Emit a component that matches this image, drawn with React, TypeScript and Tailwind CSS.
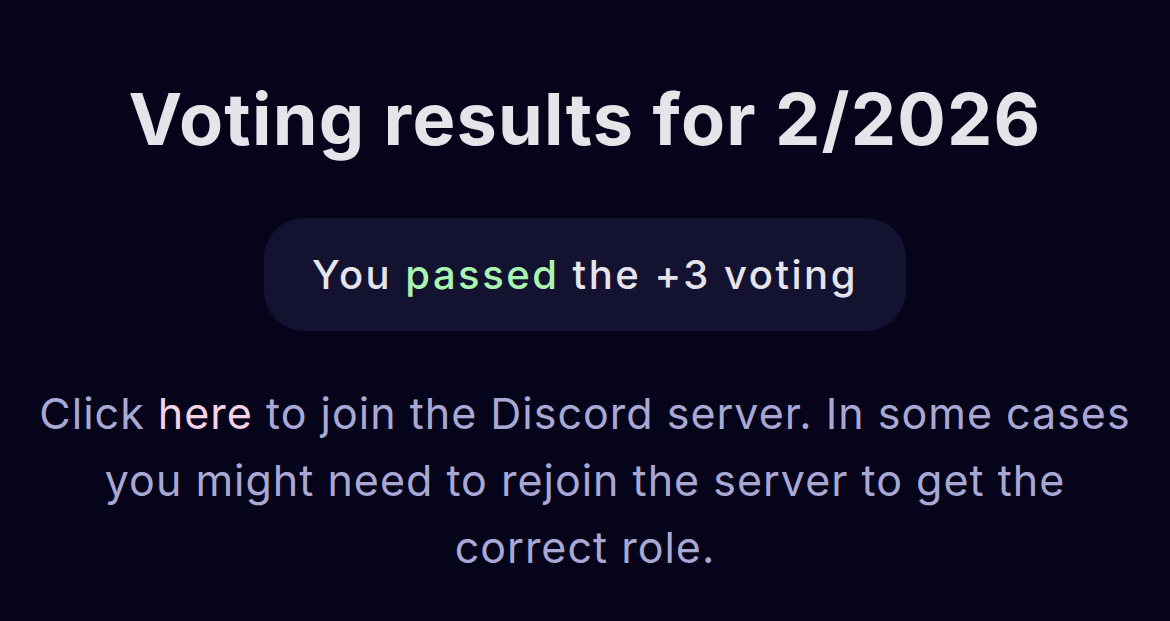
export default function App() {
  return (
    <div className="w-[1170px] h-[621px] overflow-hidden bg-[#05041a] flex flex-col items-center pt-[83px] text-center" style={{ fontFamily: '"Inter", "Noto Sans", sans-serif' }}>
      <h1 className="text-[72px] font-bold leading-none tracking-[1.2px] text-[#e6e4e8] whitespace-nowrap">Voting results for 2/2026</h1>
      <div className="mt-[63px] h-[113px] w-[642px] rounded-[40px] bg-[#141231] flex items-center justify-center">
        <p className="text-[40px] font-medium leading-none tracking-[2.5px] text-[#e6e4ea] whitespace-nowrap">
          You <span className="text-[#a9f5b0]">passed</span> the +3 voting
        </p>
      </div>
      <p className="mt-[49px] text-[43px] leading-[67px] tracking-[1px] text-[#a9a8d4] whitespace-nowrap">
        Click <span className="text-[#f6d2e6]">here</span> to join the Discord server. In some cases
        <br />
        you might need to rejoin the server to get the
        <br />
        correct role.
      </p>
    </div>
  );
}
